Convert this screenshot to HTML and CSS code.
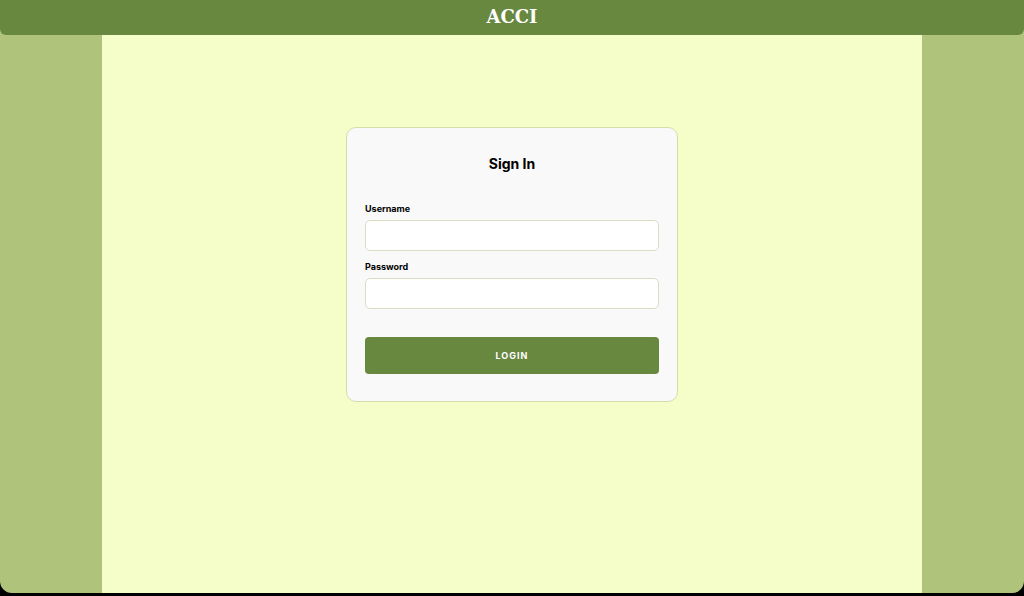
FILE: index.html
```html
<!DOCTYPE html>
<html lang="en">
<head>
<meta charset="utf-8">
<title>ACCI</title>
<link rel="stylesheet" href="styles.css">
</head>
<body>
<div class="app">
  <header class="topbar"><h1 class="brand">ACCI</h1></header>
  <main class="content">
    <form class="card">
      <h2 class="card-title">Sign In</h2>
      <label class="field-label" for="username">Username</label>
      <input class="field-input" id="username" type="text">
      <label class="field-label field-label-second" for="password">Password</label>
      <input class="field-input" id="password" type="password">
      <button class="login-btn" type="button">LOGIN</button>
    </form>
  </main>
</div>
</body>
</html>
```

FILE: styles.css
```css
html, body {
  margin: 0;
  padding: 0;
  background: #000;
  height: 596px;
  overflow: hidden;
}
.app {
  height: 593px;
  background: #afc47a;
  border-radius: 0 0 12px 12px;
  overflow: hidden;
  display: flex;
  flex-direction: column;
}
.topbar {
  height: 35px;
  flex: none;
  background: #68873f;
  border-radius: 0 0 6px 6px;
  display: flex;
  align-items: center;
  justify-content: center;
}
.brand {
  margin: -2px 0 0;
  color: #fff;
  font-family: "DejaVu Serif", "Liberation Serif", serif;
  font-weight: bold;
  font-size: 18px;
  letter-spacing: 0;
}
.content {
  flex: 1;
  width: 820px;
  margin: 0 auto;
  background: #f5fdc9;
  display: flex;
  flex-direction: column;
  align-items: center;
  padding-top: 92px;
  box-sizing: border-box;
}
.card {
  width: 332px;
  box-sizing: border-box;
  background: #f9f9f9;
  border: 1px solid #d7dda9;
  border-radius: 10px;
  padding: 26px 18px 27px;
  display: flex;
  flex-direction: column;
  font-family: Inter, "Liberation Sans", sans-serif;
}
.card-title {
  margin: 0 0 29px;
  text-align: center;
  font-size: 14px;
  line-height: 20px;
  font-weight: 700;
  color: #000;
}
.field-label {
  font-size: 9px;
  line-height: 12px;
  font-weight: 700;
  color: #000;
  margin-bottom: 5px;
}
.field-label-second {
  margin-top: 10px;
}
.field-input {
  height: 31px;
  box-sizing: border-box;
  border: 1px solid #dcdcc4;
  border-radius: 5px;
  background: #fff;
  padding: 0 8px;
  margin: 0;
}
.login-btn {
  margin-top: 28px;
  height: 37px;
  border: none;
  border-radius: 4px;
  background: #68873f;
  color: #fff;
  font-family: Inter, "Liberation Sans", sans-serif;
  font-size: 9px;
  font-weight: 700;
  letter-spacing: 1px;
}
```
